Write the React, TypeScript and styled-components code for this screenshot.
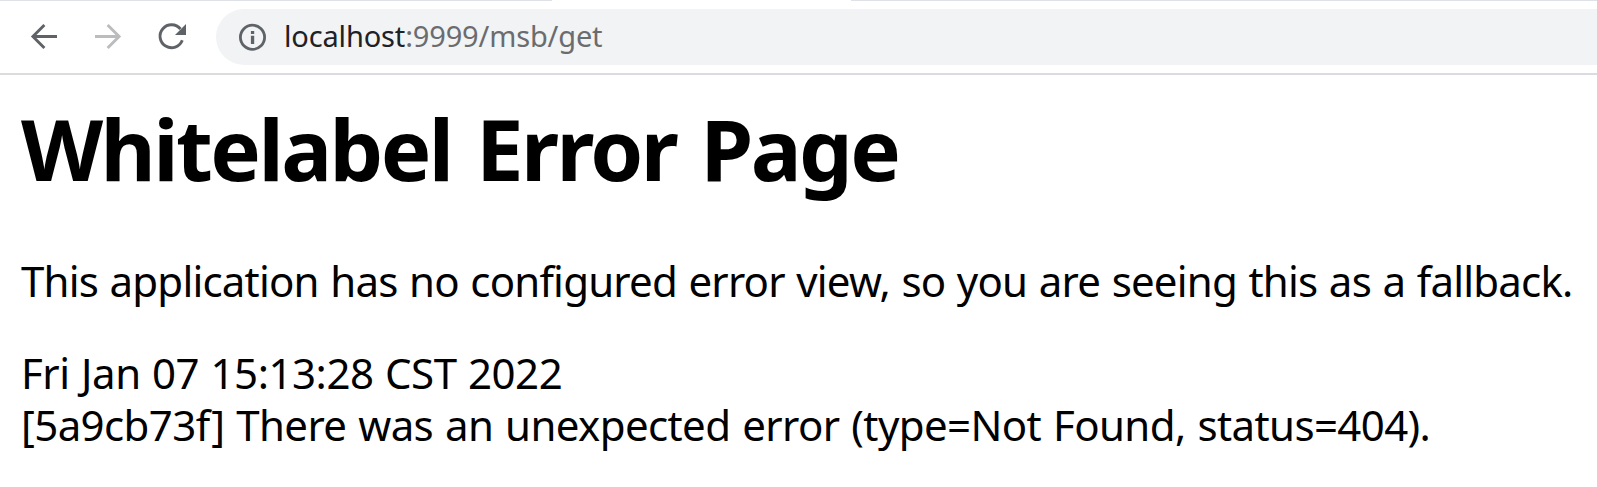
import React from "react";
import styled, { createGlobalStyle } from "styled-components";

const Global = createGlobalStyle`
  * { box-sizing: border-box; }
  body { margin: 0; background: #fff; font-family: "Noto Sans", "Open Sans", sans-serif; overflow: hidden; }
`;
const TabEdge = styled.div`
  height: 1px; display: flex; justify-content: space-between; background: #fff;
`;
const TabLine = styled.span<{ $w: number }>`
  width: ${(p) => p.$w}px; background: #dee1e6;
`;
const Toolbar = styled.header`
  height: 74px; padding: 8px 0 8px 28px; display: flex; align-items: center;
  border-bottom: 2px solid #dadce0; background: #fff;
`;
const NavGroup = styled.nav`
  display: flex; gap: 32px; margin-right: 28px;
`;
const NavIcon = styled.svg<{ $muted?: boolean }>`
  width: 32px; height: 32px; flex: none; fill: none; stroke-width: 2.9;
  color: ${(p) => (p.$muted ? "#babcbe" : "#5f6368")}; stroke: currentColor;
`;
const Address = styled.div`
  flex: 1; height: 56px; border-radius: 28px 0 0 28px; background: #f1f3f4;
  display: flex; align-items: center; padding-left: 20px; font-size: 29px; color: #6a6c6f;
`;
const InfoIcon = styled.svg`
  width: 32px; height: 32px; margin-right: 16px; flex: none; color: #5f6368;
`;
const Url = styled.span`
  white-space: nowrap; line-height: 40px; letter-spacing: -0.15px; padding-bottom: 2px;
`;
const Host = styled.span`color: #202124;`;
const Page = styled.main`padding: 26px 21px; color: #000;`;
const Title = styled.h1`
  margin: 0; font-size: 85px; line-height: 94px; font-weight: 700; white-space: nowrap;
  letter-spacing: -2.6px; word-spacing: 5px;
`;
const Line = styled.div<{ $track: number; $word: number }>`
  font-size: 42px; line-height: 52px; white-space: nowrap;
  letter-spacing: ${(p) => p.$track}px; word-spacing: ${(p) => p.$word}px;
`;
const Message = styled(Line)`margin: 60px 0 40px;`;

export default function App() {
  return (
    <>
      <Global />
      <TabEdge><TabLine $w={552} /><TabLine $w={746} /></TabEdge>
      <Toolbar>
        <NavGroup>
          <NavIcon viewBox="0 0 32 32"><path d="M29 15.5H5M16.4 4 4.9 15.5 16.4 27" /></NavIcon>
          <NavIcon viewBox="0 0 32 32" $muted><path d="M3 15.5h24M15.6 4l11.5 11.5L15.6 27" /></NavIcon>
          <NavIcon viewBox="0 0 32 32">
            <path d="M26.3 19.3A11.5 11.5 0 1 1 24.5 8" />
            <path d="M30 3v11H19z" fill="currentColor" stroke="none" />
          </NavIcon>
        </NavGroup>
        <Address>
          <InfoIcon viewBox="0 0 32 32">
            <circle cx="16.5" cy="16.3" r="12.1" fill="none" stroke="currentColor" strokeWidth="2.8" />
            <path d="M14.9 10h3.3v3.1h-3.3zM14.9 14.8h3.3V23h-3.3z" fill="currentColor" />
          </InfoIcon>
          <Url><Host>localhost</Host>:9999/msb/get</Url>
        </Address>
      </Toolbar>
      <Page>
        <Title>Whitelabel Error Page</Title>
        <Message $track={-0.8} $word={1.4}>This application has no configured error view, so you are seeing this as a fallback.</Message>
        <Line $track={-0.45} $word={0.9}>Fri Jan 07 15:13:28 CST 2022</Line>
        <Line $track={-0.6} $word={1.5}>[5a9cb73f] There was an unexpected error (type=Not Found, status=404).</Line>
      </Page>
    </>
  );
}
